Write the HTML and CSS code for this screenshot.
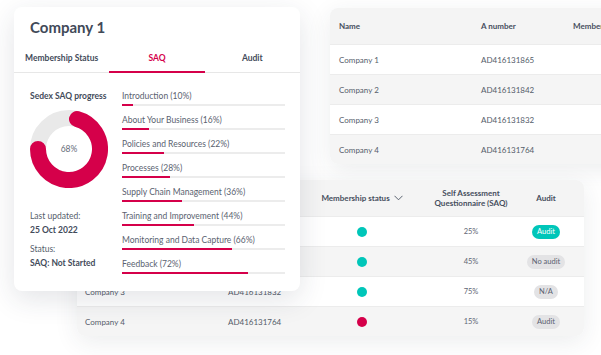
FILE: index.html
```html
<!DOCTYPE html>
<html lang="en">
<head>
  <meta charset="UTF-8">
  <title>Sedex – Company overview</title>
  <link rel="stylesheet" href="styles.css">
</head>
<body>
  <div class="scene">

    <!-- table behind, top right -->
    <div class="card table-card table-top">
      <div class="row head">
        <div class="cell">Name</div>
        <div class="cell">A number</div>
        <div class="cell">Membership status</div>
      </div>
      <div class="row">
        <div class="cell">Company 1</div>
        <div class="cell">AD416131865</div>
        <div class="cell"></div>
      </div>
      <div class="row alt">
        <div class="cell">Company 2</div>
        <div class="cell">AD416131842</div>
        <div class="cell"></div>
      </div>
      <div class="row">
        <div class="cell">Company 3</div>
        <div class="cell">AD416131832</div>
        <div class="cell"></div>
      </div>
      <div class="row alt">
        <div class="cell">Company 4</div>
        <div class="cell">AD416131764</div>
        <div class="cell"></div>
      </div>
    </div>

    <!-- table behind, bottom -->
    <div class="card table-card table-bottom">
      <div class="row head">
        <div class="cell">Name</div>
        <div class="cell">A number</div>
        <div class="cell center">Membership status
          <svg class="chevron" width="9" height="6" viewBox="0 0 9 6"><polyline points="0.5,0.8 4.5,4.8 8.5,0.8" fill="none" stroke="#4a5261" stroke-width="0.9"/></svg>
        </div>
        <div class="cell center">Self Assessment Questionnaire (SAQ)</div>
        <div class="cell center">Audit</div>
      </div>
      <div class="row">
        <div class="cell">Company 1</div>
        <div class="cell">AD416131865</div>
        <div class="cell center"><span class="dot ok"></span></div>
        <div class="cell center num">25%</div>
        <div class="cell center"><span class="badge teal">Audit</span></div>
      </div>
      <div class="row alt">
        <div class="cell">Company 2</div>
        <div class="cell">AD416131842</div>
        <div class="cell center"><span class="dot ok"></span></div>
        <div class="cell center num">45%</div>
        <div class="cell center"><span class="badge">No audit</span></div>
      </div>
      <div class="row">
        <div class="cell">Company 3</div>
        <div class="cell">AD416131832</div>
        <div class="cell center"><span class="dot ok"></span></div>
        <div class="cell center num">75%</div>
        <div class="cell center"><span class="badge">N/A</span></div>
      </div>
      <div class="row alt">
        <div class="cell">Company 4</div>
        <div class="cell">AD416131764</div>
        <div class="cell center"><span class="dot bad"></span></div>
        <div class="cell center num">15%</div>
        <div class="cell center"><span class="badge">Audit</span></div>
      </div>
    </div>

    <!-- company detail card in front -->
    <div class="card detail">
      <h1>Company 1</h1>
      <div class="tabs">
        <div class="tab">Membership Status</div>
        <div class="tab active">SAQ</div>
        <div class="tab">Audit</div>
      </div>
      <div class="detail-body">
        <div class="summary">
          <h2>Sedex SAQ progress</h2>
          <div class="donut">
            <svg width="78" height="78" viewBox="0 0 78 78">
              <circle cx="39" cy="39" r="31" fill="none" stroke="#e9e9e9" stroke-width="16"/>
              <path d="M47.0 9.1 A31 31 0 1 1 8 39" fill="none" stroke="#d5004a" stroke-width="16" stroke-linecap="round"/>
            </svg>
            <span class="donut-label">68%</span>
          </div>
          <p class="meta-label first">Last updated:</p>
          <p class="meta-value">25 Oct 2022</p>
          <p class="meta-label">Status:</p>
          <p class="meta-value">SAQ: Not Started</p>
        </div>
        <ul class="sections">
          <li><span>Introduction (10%)</span><div class="bar"><div class="fill" style="width:7%"></div></div></li>
          <li><span>About Your Business (16%)</span><div class="bar"><div class="fill" style="width:16.5%"></div></div></li>
          <li><span>Policies and Resources (22%)</span><div class="bar"><div class="fill" style="width:25.8%"></div></div></li>
          <li><span>Processes (28%)</span><div class="bar"><div class="fill" style="width:29.4%"></div></div></li>
          <li><span>Supply Chain Management (36%)</span><div class="bar"><div class="fill" style="width:36.8%"></div></div></li>
          <li><span>Training and Improvement (44%)</span><div class="bar"><div class="fill" style="width:44.2%"></div></div></li>
          <li><span>Monitoring and Data Capture (66%)</span><div class="bar"><div class="fill" style="width:67.5%"></div></div></li>
          <li><span>Feedback (72%)</span><div class="bar"><div class="fill" style="width:77.3%"></div></div></li>
        </ul>
      </div>
    </div>

  </div>
</body>
</html>
```

FILE: styles.css
```css
html, body {
  margin: 0;
  height: 100%;
  overflow: hidden;
  background: #fff;
}
body {
  font-family: Lato, "Open Sans", sans-serif;
  color: #434b5a;
}
.scene {
  position: relative;
  width: 601px;
  height: 355px;
  overflow: hidden;
}
.card {
  position: absolute;
  background: #fff;
  border-radius: 8px;
  box-shadow: 0 6px 24px rgba(40, 50, 70, 0.09);
  overflow: hidden;
}

/* tables */
.table-card .row {
  display: grid;
  align-items: center;
  height: 30px;
  font-size: 8px;
  color: #555d6b;
  border-top: 1px solid #ececec;
  box-sizing: border-box;
}
.table-card .row.head {
  height: 36px;
  border-top: none;
  background: #f4f4f4;
  font-weight: 700;
  color: #464e5d;
}
.table-card .row.alt {
  background: #f5f5f5;
}
.cell {
  white-space: nowrap;
  padding-left: 9px;
}
.cell.center {
  text-align: center;
  padding-left: 0;
  white-space: normal;
  line-height: 10px;
}
.table-top {
  left: 330px;
  top: 8px;
  width: 360px;
}
.table-top .row {
  grid-template-columns: 142px 92px 126px;
}
.table-bottom {
  left: 77px;
  top: 180px;
  width: 507px;
}
.table-bottom .row {
  grid-template-columns: 143px 70px 144px 74px 76px;
}
.table-bottom .cell:first-child {
  padding-left: 8px;
}
.table-bottom .cell:nth-child(2) {
  padding-left: 8px;
}
.chevron {
  vertical-align: middle;
  margin-left: 2px;
  margin-top: -2px;
}
.num {
  font-size: 7.5px;
  color: #5f6674;
}
.dot {
  display: inline-block;
  width: 10px;
  height: 10px;
  border-radius: 50%;
  vertical-align: middle;
}
.dot.ok { background: #00c6b9; }
.dot.bad { background: #d5004a; }
.badge {
  display: inline-block;
  padding: 0 5px;
  height: 14px;
  line-height: 14px;
  border-radius: 7px;
  background: #e3e3e5;
  color: #5a6170;
  font-size: 7.5px;
  white-space: nowrap;
}
.badge.teal {
  background: #00c6b9;
  color: #fff;
}

/* detail card */
.detail {
  left: 14px;
  top: 7px;
  width: 286px;
  height: 284px;
  box-shadow: 0 8px 28px rgba(40, 50, 70, 0.13);
}
.detail h1 {
  margin: 0;
  padding: 10px 16px 0;
  font-size: 15px;
  line-height: 20px;
  font-weight: 700;
  color: #414958;
}
.tabs {
  display: flex;
  margin-top: 9px;
  border-bottom: 1px solid #e7e7e7;
}
.tab {
  flex: 1;
  text-align: center;
  font-size: 8.5px;
  font-weight: 700;
  line-height: 12px;
  padding: 6px 0 7px;
  border-bottom: 2px solid transparent;
  margin-bottom: -1px;
  color: #434b5a;
}
.tab.active {
  color: #d5004a;
  border-bottom-color: #d5004a;
}
.detail-body {
  display: flex;
  gap: 12px;
  padding: 17px 15px 0 16px;
}
.summary {
  width: 80px;
  flex: none;
}
.summary h2 {
  margin: 0;
  font-size: 8.5px;
  line-height: 12px;
  font-weight: 700;
  white-space: nowrap;
}
.donut {
  position: relative;
  width: 78px;
  height: 78px;
  margin-top: 8px;
}
.donut svg {
  display: block;
}
.donut-label {
  position: absolute;
  left: 0;
  right: 0;
  top: 33px;
  text-align: center;
  font-size: 8.5px;
  line-height: 12px;
  color: #666d7a;
}
.meta-label, .meta-value {
  margin: 7px 0 0;
  font-size: 8.5px;
  line-height: 12px;
  color: #555d6b;
}
.meta-label.first {
  margin-top: 22px;
}
.meta-value {
  margin-top: 2px;
  font-weight: 700;
  color: #434b5a;
  white-space: nowrap;
}
.sections {
  flex: 1;
  list-style: none;
  margin: 0;
  padding: 0;
}
.sections li {
  margin-bottom: 8px;
}
.sections span {
  display: block;
  font-size: 8.5px;
  line-height: 12px;
  color: #5a6270;
  white-space: nowrap;
}
.bar {
  margin-top: 2px;
  height: 2px;
  background: #ececec;
}
.fill {
  height: 100%;
  background: #d5004a;
}
```
